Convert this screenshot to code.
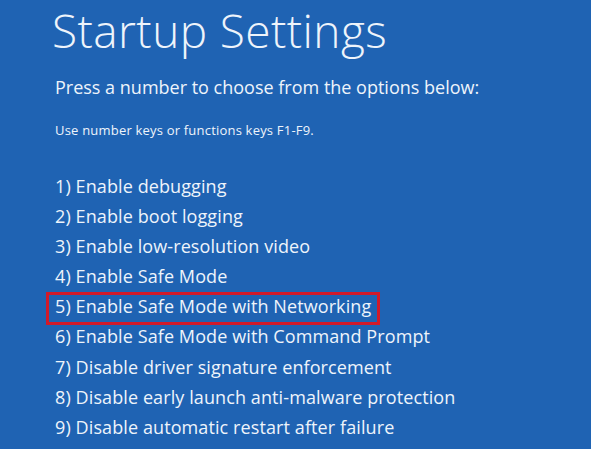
import React from 'react';

const OPTIONS = [
  '1) Enable debugging',
  '2) Enable boot logging',
  '3) Enable low-resolution video',
  '4) Enable Safe Mode',
  '5) Enable Safe Mode with Networking',
  '6) Enable Safe Mode with Command Prompt',
  '7) Disable driver signature enforcement',
  '8) Disable early launch anti-malware protection',
  '9) Disable automatic restart after failure',
];

export default function App() {
  return (
    <div
      className="w-[591px] h-[449px] overflow-hidden bg-[#1f63b3] text-[#eef4fb] pl-[55px]"
      style={{ fontFamily: '"Open Sans", "Noto Sans", sans-serif' }}
    >
      <h1 className="text-[46px] leading-[52px] font-light pt-[4px] -ml-[3px] tracking-[0.4px]">Startup Settings</h1>
      <p className="text-[18px] leading-[24px] mt-[19px]">Press a number to choose from the options below:</p>
      <p className="text-[13px] leading-[18px] mt-[22px] tracking-[0.2px]">Use number keys or functions keys F1-F9.</p>
      <ul className="mt-[32px] text-[18px] tracking-[0.1px]">
        {OPTIONS.map((opt, i) => (
          <li key={i} className="relative h-[30.1px] leading-[30px]">
            {i === 4 && (
              <span className="absolute -left-[9px] top-[1px] w-[334px] h-[33px] border-[3px] border-[#d11a2a]" />
            )}
            {opt}
          </li>
        ))}
      </ul>
    </div>
  );
}
